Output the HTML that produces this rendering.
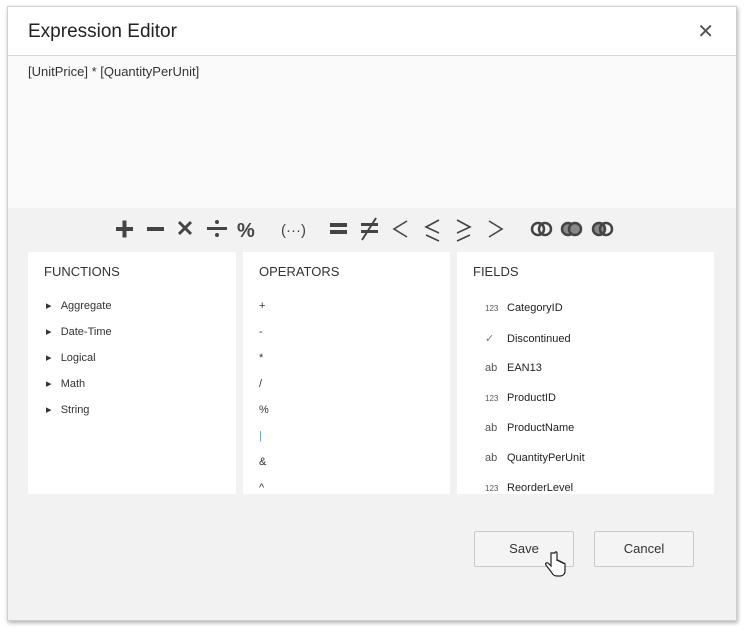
<!DOCTYPE html>
<html><head><style>
body{margin:0;width:747px;height:635px;background:#fff;font-family:"Liberation Sans",sans-serif;position:relative;overflow:hidden}
.dlg{position:absolute;left:7px;top:6px;width:728px;height:613px;background:#f2f2f2;border:1px solid #cfcfcf;box-shadow:1px 2px 4px rgba(0,0,0,.3)}
.hdr{position:absolute;left:0;top:0;width:728px;height:48px;background:#fff;border-bottom:1px solid #d6d6d6}
.hdr .t{position:absolute;left:20px;top:14px;font-size:19px;color:#222}
.hdr .x{position:absolute;right:22px;top:12px;font-size:20px;color:#555}
.expr{position:absolute;left:0;top:49px;width:728px;height:152px;background:#fafafa}
.expr div{position:absolute;left:20px;top:8px;font-size:13px;color:#333}
.p{position:absolute;top:245px;height:242px;background:#fff;overflow:hidden}
.p h{position:absolute;left:16px;top:12px;font-size:13px;color:#333;font-weight:normal;display:block}
.it{position:absolute;font-size:11px;color:#333}
.f .it{color:#222}
.btn{position:absolute;top:524px;width:98px;height:34px;border:1px solid #c9c9c9;border-radius:2px;background:#f4f4f4;font-size:13px;color:#333;text-align:center;line-height:34px}
</style></head><body>
<div class="dlg">
<div class="hdr"><div class="t">Expression Editor</div><div class="x">✕</div></div>
<div class="expr"><div>[UnitPrice] * [QuantityPerUnit]</div></div>
<svg style="position:absolute;left:93px;top:203px" width="530" height="40">
<g fill="#444" stroke="#444">
<rect x="15" y="17" width="17" height="4" stroke="none"/><rect x="21.5" y="10.5" width="4" height="17" stroke="none"/>
<rect x="46" y="17" width="17" height="4" stroke="none"/>
<path d="M78 12l12 12M90 12l-12 12" stroke-width="3" fill="none"/>
<rect x="106" y="17" width="20" height="3" stroke="none"/><circle cx="116" cy="12" r="2" stroke="none"/><circle cx="116" cy="25" r="2" stroke="none"/>
<text x="136" y="27" font-size="20" font-weight="bold" font-family="Liberation Sans" stroke="none">%</text>
<text x="180" y="25" font-size="15" font-family="Liberation Sans" stroke="none">(···)</text>
<rect x="229" y="13" width="17" height="4" stroke="none"/><rect x="229" y="20" width="17" height="4" stroke="none"/>
<rect x="260" y="13" width="17" height="3" stroke="none"/><rect x="260" y="20" width="17" height="3" stroke="none"/><path d="M275 8l-14 22" stroke-width="2" fill="none"/>
<path d="M306 11l-13 8 13 8M338 10l-13 7 13 6M325 25l13 6M356 10l13 7-13 6M369 25l-13 6M388 11l13 8-13 8" stroke-width="1.6" fill="none"/>
<circle cx="437" cy="19" r="6" fill="none" stroke-width="2.5"/><circle cx="444" cy="19" r="6" fill="none" stroke-width="2.5"/>
<circle cx="467" cy="19" r="6" fill="#888" stroke-width="2.5"/><circle cx="474" cy="19" r="6" fill="#888" stroke-width="2.5"/>
<circle cx="498" cy="19" r="6" fill="#888" stroke-width="2.5"/><circle cx="505" cy="19" r="6" fill="none" stroke-width="2.5"/>
</g></svg>
<div class="p" style="left:20px;width:208px"><h>FUNCTIONS</h>
<div class="it" style="left:18px;top:47px">▸&nbsp;&nbsp;&nbsp;Aggregate</div>
<div class="it" style="left:18px;top:73px">▸&nbsp;&nbsp;&nbsp;Date-Time</div>
<div class="it" style="left:18px;top:99px">▸&nbsp;&nbsp;&nbsp;Logical</div>
<div class="it" style="left:18px;top:125px">▸&nbsp;&nbsp;&nbsp;Math</div>
<div class="it" style="left:18px;top:151px">▸&nbsp;&nbsp;&nbsp;String</div></div>
<div class="p" style="left:235px;width:207px"><h>OPERATORS</h>
<div class="it" style="left:16px;top:48px">+</div><div class="it" style="left:16px;top:74px">-</div><div class="it" style="left:16px;top:100px">*</div><div class="it" style="left:16px;top:126px">/</div><div class="it" style="left:16px;top:152px">%</div><div class="it" style="left:16px;top:178px;color:#5aa0d0">|</div><div class="it" style="left:16px;top:204px">&amp;</div><div class="it" style="left:16px;top:230px">^</div></div>
<div class="p f" style="left:449px;width:257px"><h>FIELDS</h>
<div class="it" style="left:28px;top:50px"><span style="font-size:8px;color:#555;display:inline-block;width:22px">123</span>CategoryID</div>
<div class="it" style="left:28px;top:80px"><span style="color:#777;display:inline-block;width:22px">✓</span>Discontinued</div>
<div class="it" style="left:28px;top:110px"><span style="color:#555;display:inline-block;width:22px">ab</span>EAN13</div>
<div class="it" style="left:28px;top:140px"><span style="font-size:8px;color:#555;display:inline-block;width:22px">123</span>ProductID</div>
<div class="it" style="left:28px;top:170px"><span style="color:#555;display:inline-block;width:22px">ab</span>ProductName</div>
<div class="it" style="left:28px;top:200px"><span style="color:#555;display:inline-block;width:22px">ab</span>QuantityPerUnit</div>
<div class="it" style="left:28px;top:230px"><span style="font-size:8px;color:#555;display:inline-block;width:22px">123</span>ReorderLevel</div></div>
<div class="btn" style="left:466px">Save</div>
<div class="btn" style="left:586px">Cancel</div>
</div>
<svg style="position:absolute;left:545px;top:551px" width="22" height="28"><path d="M6 2v13l-3-3c-2-1-3 1-2 2l6 8c1 2 3 3 5 3h3c3 0 5-2 5-5v-7c0-1-2-1-2 0v-1c0-1-2-1-2 0v-1c0-1-2-1-2 0v-1c0-1-2-1-2 0V2c0-1.5-2-1.5-2 0z" fill="#fff" stroke="#222" stroke-width="1.2"/></svg>
</body></html>
